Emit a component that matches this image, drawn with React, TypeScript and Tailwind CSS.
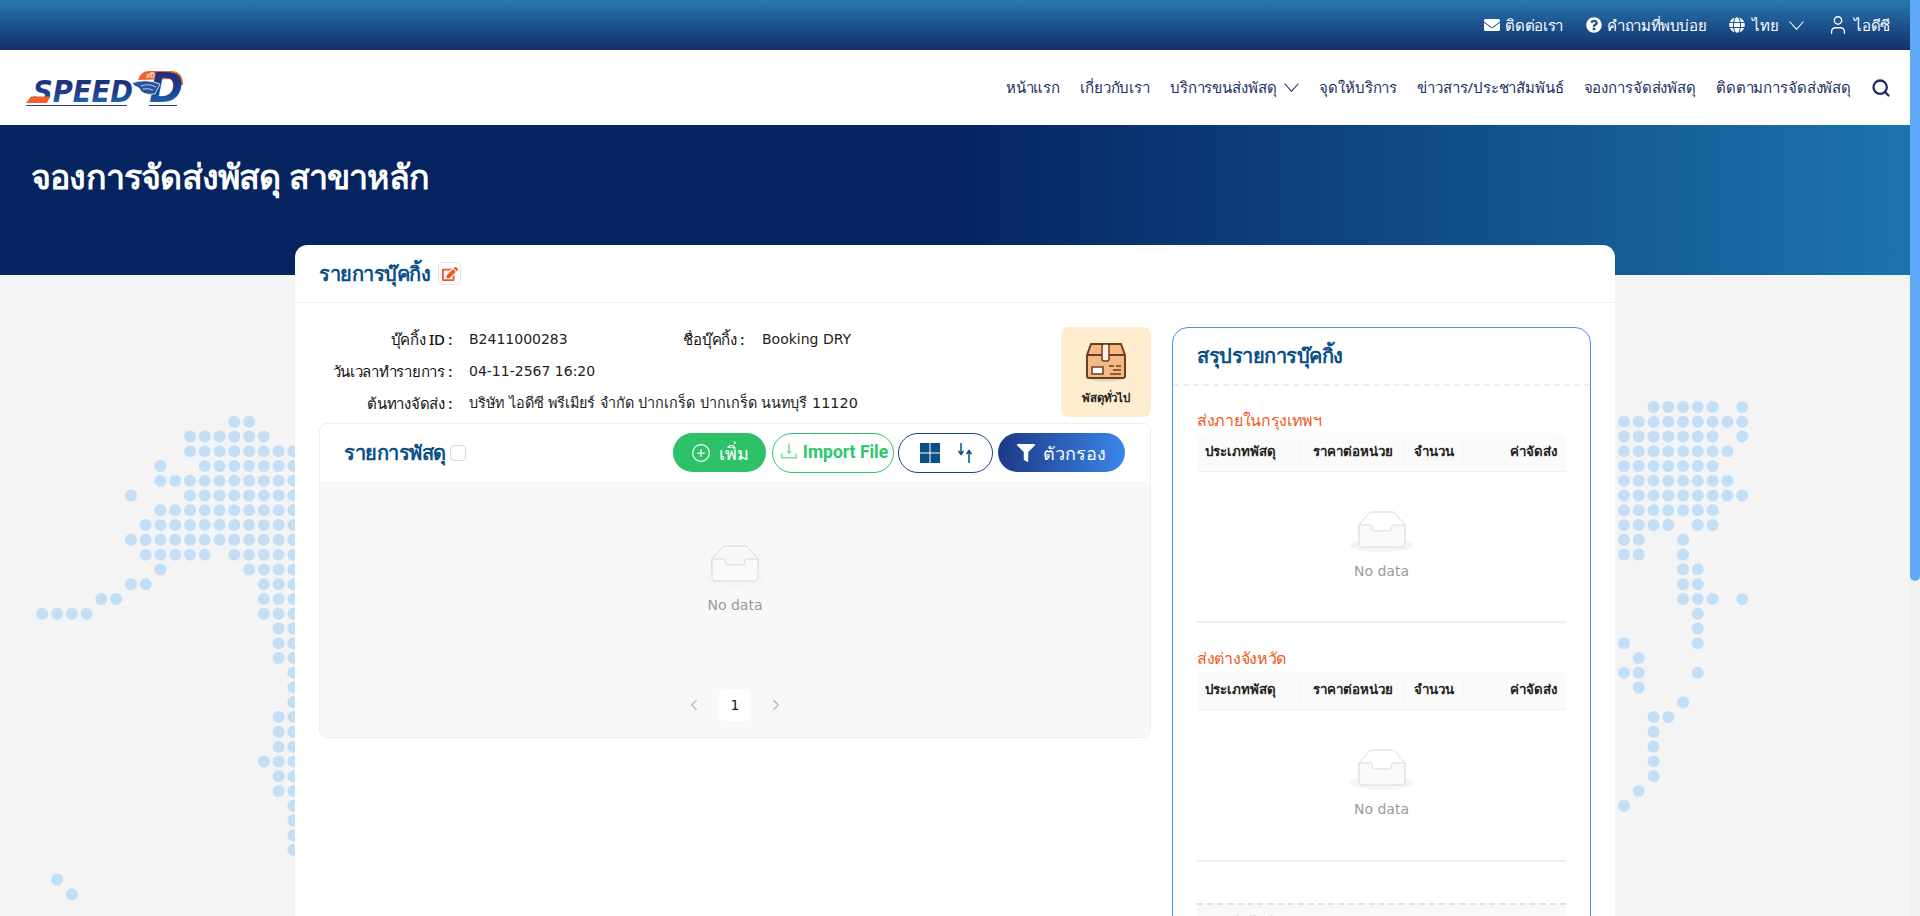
import { ChevronLeft, ChevronRight, CirclePlus, Search, User } from "lucide-react";
import { FaEdit, FaEnvelope, FaFilter, FaGlobe, FaQuestionCircle } from "react-icons/fa";
import { AiOutlineDownload } from "react-icons/ai";

const PITCH = 14.77;

// dot rows of the map, [row, columns]
const leftDots: number[][] = [
  [13, 14],
  [10, 11, 12, 13, 14, 15],
  [10, 11, 12, 13, 14, 15, 16, 17],
  [8, 11, 12, 13, 14, 15, 16, 17],
  [8, 9, 10, 11, 12, 13, 14, 15, 16, 17],
  [6, 10, 11, 12, 13, 14, 15, 16, 17],
  [8, 9, 10, 11, 12, 13, 14, 15, 16, 17],
  [7, 8, 9, 10, 11, 12, 13, 14, 15, 16, 17],
  [6, 7, 8, 9, 10, 11, 12, 13, 14, 15, 16, 17],
  [7, 8, 9, 10, 11, 13, 14, 15, 16, 17],
  [8, 14, 15, 16, 17],
  [6, 7, 15, 16, 17],
  [4, 5, 15, 16, 17],
  [0, 1, 2, 3, 15, 16, 17],
  [16, 17],
  [16, 17],
  [16, 17],
  [17],
  [17],
  [17],
  [16, 17],
  [16, 17],
  [16, 17],
  [15, 16, 17],
  [16, 17],
  [16, 17],
  [17],
  [17],
  [17],
  [17],
  [],
  [1],
  [2],
];

const rightDots: number[][] = [
  [2, 3, 4, 5, 6, 8],
  [0, 1, 2, 3, 4, 5, 6, 7, 8],
  [0, 1, 2, 3, 4, 5, 6, 8],
  [0, 1, 2, 3, 4, 5, 6, 7],
  [0, 1, 2, 3, 4, 5, 6],
  [0, 1, 2, 3, 4, 5, 6, 7],
  [0, 1, 2, 3, 4, 5, 6, 7, 8],
  [0, 1, 2, 3, 4, 5, 6],
  [0, 1, 2, 3, 5, 6],
  [0, 1, 4],
  [0, 1, 4],
  [4, 5],
  [4, 5],
  [4, 5, 6, 8],
  [5],
  [5],
  [0, 5],
  [1],
  [0, 1, 5],
  [1],
  [4],
  [2, 3],
  [2],
  [2],
  [2],
  [2],
  [1],
  [0],
];

const DotMap = () => (
  <svg className="absolute left-0 top-[125px] z-0" width="1910" height="800" fill="#c2dff7">
    {leftDots.map((cols, r) =>
      cols.map((c) => <circle key={`l${r}-${c}`} cx={42.3 + c * PITCH} cy={296.7 + r * PITCH} r="6" />)
    )}
    {rightDots.map((cols, r) =>
      cols.map((c) => <circle key={`r${r}-${c}`} cx={1624 + c * PITCH} cy={281.9 + r * PITCH} r="6" />)
    )}
  </svg>
);

const Logo = () => (
  <svg width="160" height="38" viewBox="0 0 160 38" className="shrink-0 overflow-visible">
    <defs>
      <linearGradient id="speedFill" x1="0" y1="0" x2="0" y2="1">
        <stop offset="0" stopColor="#1c2c70" />
        <stop offset="0.55" stopColor="#1e3f8c" />
        <stop offset="1" stopColor="#1f7cc4" />
      </linearGradient>
    </defs>
    <path d="M113 11 q3-9 11-9 h22 q12 0 12 14 l-7 0 q0-6-7-6z" fill="#f0622d" />
    <text x="121" y="8.5" fontSize="7" fill="#fff" fontFamily="DejaVu Sans, sans-serif">สปีด-ดี</text>
    <text x="8" y="33" fontSize="30" fontWeight="700" fontStyle="italic" fontFamily="DejaVu Sans, sans-serif" fill="url(#speedFill)" textLength="100" lengthAdjust="spacingAndGlyphs">
      SPEED
    </text>
    <path d="M1 34 L6 27.5 H25 L22 34z" fill="#f0622d" />
    <text x="124" y="33" fontSize="41" fontWeight="700" fontStyle="italic" fontFamily="DejaVu Sans, sans-serif" fill="url(#speedFill)">
      D
    </text>
    <path d="M107 14 q14-5 28 1 l-5 10 q-13 2-16-6 q-4-1-7-5z" fill="#26549f" stroke="#fff" strokeWidth="0.8" />
    <path d="M116 17 q8-3 15 1 M118 20 q6-1 10 1" fill="none" stroke="#fff" strokeWidth="0.7" />
    <path d="M1 36.5 H102 M124 36.5 H152" stroke="#2d3d85" strokeWidth="1" />
  </svg>
);

const BoxIcon = () => (
  <svg width="40" height="40" viewBox="0 0 40 40">
    <ellipse cx="20" cy="35" rx="17" ry="5" fill="#dcd9c3" />
    <path d="M1 13 L5 2 H35 L39 13 V34 a2 2 0 0 1-2 2 H3 a2 2 0 0 1-2-2z" fill="#f5b985" stroke="#6d3d20" strokeWidth="2" strokeLinejoin="round" />
    <path d="M1 13 H39" stroke="#6d3d20" strokeWidth="2" />
    <rect x="16" y="2" width="7" height="17" rx="2" fill="#fdf0e2" stroke="#6d3d20" strokeWidth="1.5" />
    <rect x="6" y="25" width="11" height="7" fill="#fff" stroke="#6d3d20" strokeWidth="1.5" />
    <path d="M23 24 H28 M30 24 H35 M27 28 H35 M24 32 H35" stroke="#6d3d20" strokeWidth="1.5" />
  </svg>
);

const EmptyIcon = () => (
  <svg width="64" height="41" viewBox="0 0 64 41" className="block">
    <g transform="translate(0 1)" fill="none" fillRule="evenodd">
      <ellipse fill="#f5f5f5" cx="32" cy="33" rx="32" ry="7" />
      <g fillRule="nonzero" stroke="#d9d9d9">
        <path d="M55 12.76L44.854 1.258C44.367.474 43.656 0 42.907 0H21.093c-.749 0-1.46.474-1.947 1.257L9 12.761V22h46v-9.24z" />
        <path
          d="M41.613 15.931c0-1.605.994-2.93 2.227-2.931H55v18.137C55 33.26 53.68 35 52.05 35h-40.1C10.32 35 9 33.259 9 31.137V13h11.16c1.233 0 2.227 1.323 2.227 2.928v.022c0 1.605 1.005 2.901 2.237 2.901h14.752c1.232 0 2.237-1.308 2.237-2.913v-.007z"
          fill="#fafafa"
        />
      </g>
    </g>
  </svg>
);

const Chevron = () => (
  <svg width="15" height="9" viewBox="0 0 15 9" fill="none" stroke="currentColor" strokeWidth="1.1">
    <path d="M0.5 0.5 L7.5 8.3 L14.5 0.5" />
  </svg>
);

const Empty = () => (
  <div className="flex flex-col items-center">
    <EmptyIcon />
    <div className="mt-2 text-sm leading-[22px] text-[#9a9a9a]">No data</div>
  </div>
);

const SummaryTable = ({ title, first }: { title: string; first?: boolean }) => (
  <div className={`border-b-2 border-[#f0f0f0] ${first ? "pt-[22px]" : "pt-[23px]"}`}>
    <div className={`mb-px ${brandFont} text-base leading-6 font-medium tracking-[-0.3px] text-[#f05a22]`}>{title}</div>
    <div className="grid h-[39px] grid-cols-[104px_104px_58px_1fr] items-center rounded-t-lg border-b border-[#f0f0f0] bg-[#fafafa] text-[13.3px] font-bold text-[#222]">
      <div className="border-r border-[#f0f0f0] pl-2">ประเภทพัสดุ</div>
      <div className="border-r border-[#f0f0f0] text-center">ราคาต่อหน่วย</div>
      <div className="border-r border-[#f0f0f0] text-center">จำนวน</div>
      <div className="pr-[9px] text-right">ค่าจัดส่ง</div>
    </div>
    <div className={`pt-[39px] ${first ? "h-[149px]" : "h-[150px]"}`}>
      <Empty />
    </div>
  </div>
);

// the site's thai headings run narrower than the body text
const brandFont = "[font-family:'Noto_Sans',sans-serif]";
const labelCls = `text-right ${brandFont} text-[15px] font-medium tracking-[-0.3px] text-[#111]`;
const topLinks = "flex items-center gap-[5px]";
const navItems = ["หน้าแรก", "เกี่ยวกับเรา"];
const navItems2 = ["จุดให้บริการ", "ข่าวสาร/ประชาสัมพันธ์", "จองการจัดส่งพัสดุ", "ติดตามการจัดส่งพัสดุ"];

const App = () => {
  return (
    <div className="flex h-screen overflow-hidden bg-[#f4f4f4] [font-family:'DejaVu_Sans',sans-serif]">
      <div className="min-w-0 flex-1 overflow-y-auto [scrollbar-width:none]">
        <div className="relative min-h-[1444px]">
          <div className={`flex h-[50px] items-center justify-end gap-[23px] bg-gradient-to-b from-[#2878b0] to-[#132f6b] pr-5 ${brandFont} text-[15px] tracking-[-0.35px] text-white`}>
            <div className={topLinks}>
              <FaEnvelope size={16} />
              ติดต่อเรา
            </div>
            <div className={topLinks}>
              <FaQuestionCircle size={16} />
              คำถามที่พบบ่อย
            </div>
            <div className={topLinks}>
              <FaGlobe size={16} />
              <span className="ml-0.5">ไทย</span>
              <span className="ml-1.5">
                <Chevron />
              </span>
            </div>
            <div className={topLinks}>
              <User size={22} strokeWidth={1.5} />
              ไอดีซี
            </div>
          </div>

          <div className="flex h-[75px] items-center justify-between bg-white pl-[25px] pr-[19px]">
            <Logo />
            <nav className={`flex items-center gap-5 ${brandFont} text-[15px] tracking-[-0.13px] text-[#1b2f63]`}>
              {navItems.map((item) => (
                <span key={item}>{item}</span>
              ))}
              <span className="flex items-center gap-2">
                บริการขนส่งพัสดุ
                <Chevron />
              </span>
              {navItems2.map((item) => (
                <span key={item}>{item}</span>
              ))}
              <Search size={20} strokeWidth={2.75} />
            </nav>
          </div>

          <div className={`h-[150px] bg-[linear-gradient(to_right,#052460_50%,#1d74ad)] pl-[31px] pt-[28px] ${brandFont} text-[34px] leading-[46px] font-semibold tracking-[-0.8px] text-white`}>
            จองการจัดส่งพัสดุ สาขาหลัก
          </div>

          <DotMap />

          <div className="relative z-10 mx-auto -mt-[30px] w-[1320px] rounded-t-xl bg-white">
            <div className="flex h-[58px] items-center gap-2 border-b border-[#f0f0f0] px-6">
              <span className={`${brandFont} text-xl font-semibold tracking-[-0.5px] text-[#0a5088]`}>รายการบุ๊คกิ้ง</span>
              <span className="flex h-[23px] w-[23px] items-center justify-center rounded border border-[#e5e5e5] text-[#f05a22]">
                <FaEdit size={16} />
              </span>
            </div>

            <div className="flex items-start gap-[21px] px-6 pt-6 pb-10">
              <div className="w-[832px] shrink-0">
                <div className="flex justify-between">
                  <div className="flex flex-col gap-2 text-sm leading-6 text-[#222]">
                    <div className="flex">
                      <span className={`w-[133px] ${labelCls}`}>บุ๊คกิ้ง ID :</span>
                      <span className="ml-[17px] w-[125px]">B2411000283</span>
                      <span className={`w-[150px] ${labelCls}`}>ชื่อบุ๊คกิ้ง :</span>
                      <span className="ml-[18px]">Booking DRY</span>
                    </div>
                    <div className="flex">
                      <span className={`w-[133px] ${labelCls}`}>วันเวลาทำรายการ :</span>
                      <span className="ml-[17px]">04-11-2567 16:20</span>
                    </div>
                    <div className="flex">
                      <span className={`w-[133px] ${labelCls}`}>ต้นทางจัดส่ง :</span>
                      <span className="ml-[17px] text-[14.4px]">บริษัท ไอดีซี พรีเมียร์ จำกัด ปากเกร็ด ปากเกร็ด นนทบุรี 11120</span>
                    </div>
                  </div>
                  <div className="flex h-[90px] w-[90px] flex-col items-center rounded-lg bg-[#ffedd0] pt-[15px]">
                    <BoxIcon />
                    <span className={`mt-[7px] ${brandFont} text-[11.5px] font-semibold tracking-[-0.2px] text-[#222]`}>พัสดุทั่วไป</span>
                  </div>
                </div>

                <div className="mt-1.5 overflow-hidden rounded-lg border border-[#eee]">
                  <div className="flex h-[57px] items-center bg-white pl-6 pr-[25px]">
                    <span className={`${brandFont} text-xl font-semibold tracking-[-0.5px] text-[#0a5088]`}>รายการพัสดุ</span>
                    <span className="ml-1 h-4 w-4 rounded border border-[#d9d9d9]" />
                    <div className={`ml-auto flex items-center ${brandFont}`}>
                      <button className="flex h-[39px] w-[93px] items-center justify-center gap-2 rounded-full bg-[#2dc268] text-lg text-white">
                        <CirclePlus size={20} strokeWidth={1.5} />
                        เพิ่ม
                      </button>
                      <button className="ml-1.5 flex h-10 w-[122px] items-center justify-center gap-[3px] rounded-full border border-[#2cc76c] bg-white [font-family:Roboto,sans-serif] text-[17.5px] font-bold text-[#2cc76c]">
                        <AiOutlineDownload size={22} className="mb-1 opacity-60" />
                        Import File
                      </button>
                      <button className="ml-1 flex h-10 w-[95px] items-center justify-center gap-[18px] rounded-full border border-[#1f3f8b] bg-white">
                        <svg width="20" height="20" viewBox="0 0 20 20" fill="#0a5088">
                          <rect width="9.5" height="9.5" />
                          <rect x="10.5" width="9.5" height="9.5" />
                          <rect y="10.5" width="9.5" height="9.5" />
                          <rect x="10.5" y="10.5" width="9.5" height="9.5" />
                        </svg>
                        <svg width="14" height="20" viewBox="0 0 14 20" fill="none" stroke="#0a5088" strokeWidth="1.5">
                          <path d="M3 0 V11 M0.5 8 L3 11.5 L5.5 8" />
                          <path d="M11 20 V8 M8.5 11 L11 7.5 L13.5 11" />
                        </svg>
                      </button>
                      <button className="ml-[5px] flex h-[39px] w-[127px] items-center justify-center gap-2 rounded-full bg-gradient-to-r from-[#1c3a86] to-[#3c86ea] text-lg text-white">
                        <FaFilter size={18} />
                        ตัวกรอง
                      </button>
                    </div>
                  </div>
                  <div className="h-[256px] bg-[#f8f8f8] pt-16">
                    <Empty />
                    <div className="mt-[73px] flex items-center justify-center gap-2 text-[#b5b5b5]">
                      <ChevronLeft size={18} strokeWidth={1.5} className="mr-2" />
                      <span className="flex h-8 w-8 items-center justify-center rounded-md bg-white text-sm text-[#222]">1</span>
                      <ChevronRight size={18} strokeWidth={1.5} className="ml-2" />
                    </div>
                  </div>
                </div>
              </div>

              <div className="w-[419px] shrink-0 rounded-2xl border border-[#4a8df0] bg-white">
                <div className={`flex h-[58px] items-center border-b-2 border-dashed border-[#eee] px-6 ${brandFont} text-xl font-semibold tracking-[-0.5px] text-[#0a5088]`}>
                  สรุปรายการบุ๊คกิ้ง
                </div>
                <div className="px-6 pb-6">
                  <SummaryTable title="ส่งภายในกรุงเทพฯ" first />
                  <SummaryTable title="ส่งต่างจังหวัด" />
                  <div className="mt-[41px] border-t-2 border-dashed border-[#e0e0e8] bg-[#f9f9f9] pl-[33px] pr-3 pt-[7px] pb-3 text-sm font-bold text-[#222]">
                    <div className="flex justify-between">
                      <span>ค่าจัดส่งรวม</span>
                      <span>0.00</span>
                    </div>
                  </div>
                </div>
              </div>
            </div>
          </div>
        </div>
      </div>

      <div className="w-[10px] shrink-0 bg-[#f1f1f1]">
        <div className="h-[581px] rounded-b-[10px] bg-[#60a9f8]" />
      </div>
    </div>
  );
};

export default App;
